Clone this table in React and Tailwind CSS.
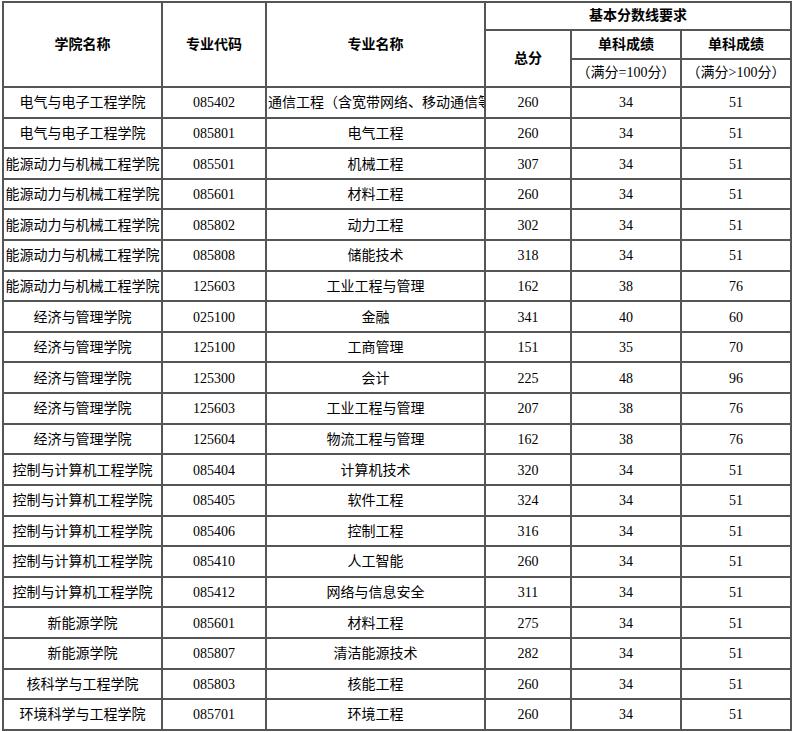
import React from 'react';

const ROWS = [
  ['电气与电子工程学院', '085402', '通信工程（含宽带网络、移动通信等）', '260', '34', '51'],
  ['电气与电子工程学院', '085801', '电气工程', '260', '34', '51'],
  ['能源动力与机械工程学院', '085501', '机械工程', '307', '34', '51'],
  ['能源动力与机械工程学院', '085601', '材料工程', '260', '34', '51'],
  ['能源动力与机械工程学院', '085802', '动力工程', '302', '34', '51'],
  ['能源动力与机械工程学院', '085808', '储能技术', '318', '34', '51'],
  ['能源动力与机械工程学院', '125603', '工业工程与管理', '162', '38', '76'],
  ['经济与管理学院', '025100', '金融', '341', '40', '60'],
  ['经济与管理学院', '125100', '工商管理', '151', '35', '70'],
  ['经济与管理学院', '125300', '会计', '225', '48', '96'],
  ['经济与管理学院', '125603', '工业工程与管理', '207', '38', '76'],
  ['经济与管理学院', '125604', '物流工程与管理', '162', '38', '76'],
  ['控制与计算机工程学院', '085404', '计算机技术', '320', '34', '51'],
  ['控制与计算机工程学院', '085405', '软件工程', '324', '34', '51'],
  ['控制与计算机工程学院', '085406', '控制工程', '316', '34', '51'],
  ['控制与计算机工程学院', '085410', '人工智能', '260', '34', '51'],
  ['控制与计算机工程学院', '085412', '网络与信息安全', '311', '34', '51'],
  ['新能源学院', '085601', '材料工程', '275', '34', '51'],
  ['新能源学院', '085807', '清洁能源技术', '282', '34', '51'],
  ['核科学与工程学院', '085803', '核能工程', '260', '34', '51'],
  ['环境科学与工程学院', '085701', '环境工程', '260', '34', '51'],
];

const cell = 'bg-white flex items-center justify-center whitespace-nowrap overflow-hidden';
const td = `${cell} pt-[2px]`;

export default function App() {
  return (
    <div className="bg-white w-[793px] h-[732px] pt-[1px] pl-[2px] text-[14px] text-black leading-none"
         style={{ fontFamily: '"Liberation Serif", "Noto Sans CJK SC", serif' }}>
      <div className="grid w-[790px] gap-[2px] p-[2px] bg-[#555]
                      grid-cols-[157px_102px_217px_84px_108px_108px]
                      grid-rows-[26px_27px_26px_repeat(21,28.62px)]">
        {/* header */}
        <div className={`${cell} row-span-3 font-bold`}>学院名称</div>
        <div className={`${cell} row-span-3 font-bold`}>专业代码</div>
        <div className={`${cell} row-span-3 font-bold`}>专业名称</div>
        <div className={`${cell} col-span-3 font-bold`}>基本分数线要求</div>
        <div className={`${cell} row-span-2 font-bold`}>总分</div>
        <div className={`${cell} font-bold`}>单科成绩</div>
        <div className={`${cell} font-bold`}>单科成绩</div>
        <div className={cell}>（满分=100分）</div>
        <div className={cell}>（满分&gt;100分）</div>

        {/* body */}
        {ROWS.map((r, i) => (
          <React.Fragment key={i}>
            <div className={td}>{r[0]}</div>
            <div className={td}>{r[1]}</div>
            <div className={`${td} ${i === 0 ? 'justify-start pl-[1px]' : ''}`}>{r[2]}</div>
            <div className={td}>{r[3]}</div>
            <div className={td}>{r[4]}</div>
            <div className={td}>{r[5]}</div>
          </React.Fragment>
        ))}
      </div>
    </div>
  );
}
